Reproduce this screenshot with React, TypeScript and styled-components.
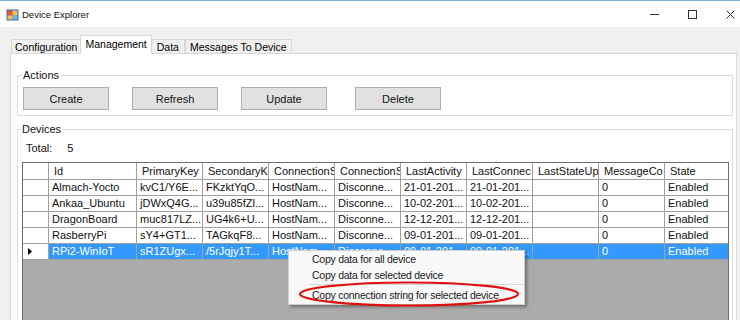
import styled, { createGlobalStyle } from "styled-components";

const GlobalStyle = createGlobalStyle`
  body {
    margin: 0;
    background: #f0f0f0;
    font-family: "Liberation Sans", Arial, sans-serif;
    color: #000;
  }
  #root {
    width: 740px;
    height: 320px;
    overflow: hidden;
  }
`;

// header captions as far as the narrow columns show them
const COLUMNS = [
  "Id",
  "PrimaryKey",
  "SecondaryK",
  "ConnectionS",
  "ConnectionS",
  "LastActivity",
  "LastConnec",
  "LastStateUp",
  "MessageCo",
  "State",
];

const DEVICES = [
  ["Almach-Yocto", "kvC1/Y6E...", "FKzktYqO...", "HostNam...", "Disconne...", "21-01-201...", "21-01-201...", "", "0", "Enabled"],
  ["Ankaa_Ubuntu", "jDWxQ4G...", "u39u85fZl...", "HostNam...", "Disconne...", "10-02-201...", "10-02-201...", "", "0", "Enabled"],
  ["DragonBoard", "muc817LZ...", "UG4k6+U...", "HostNam...", "Disconne...", "12-12-201...", "12-12-201...", "", "0", "Enabled"],
  ["RasberryPi", "sY4+GT1...", "TAGkqF8...", "HostNam...", "Disconne...", "09-01-201...", "09-01-201...", "", "0", "Enabled"],
  ["RPi2-WinIoT", "sR1ZUgx...", "/5rJqjy1T...", "HostNam...", "Disconne...", "09-01-201...", "09-01-201...", "", "0", "Enabled"],
];

const SELECTED = 4;

export default function App() {
  return (
    <Window>
      <GlobalStyle />
      <TitleBar>
        <AppIcon width="13" height="12" viewBox="0 0 13 12">
          <rect x="0.5" y="0.5" width="12" height="11" fill="#2f6fc4" />
          <rect x="1.5" y="1.5" width="5" height="5" fill="#e8572a" />
          <rect x="6.5" y="1.5" width="5" height="5" fill="#f4c542" />
          <rect x="1.5" y="6.5" width="5" height="4" fill="#f4c542" />
          <rect x="6.5" y="6.5" width="5" height="4" fill="#7fb2ec" />
        </AppIcon>
        <Title>Device Explorer</Title>
        <Controls>
          <svg width="9" height="9" viewBox="0 0 9 9">
            <line x1="0" y1="4.5" x2="9" y2="4.5" stroke="#333" strokeWidth="1" />
          </svg>
          <svg width="9" height="9" viewBox="0 0 9 9">
            <rect x="0.5" y="0.5" width="8" height="8" fill="none" stroke="#333" strokeWidth="1" />
          </svg>
          <svg width="9" height="9" viewBox="0 0 9 9">
            <path d="M0.5 0.5 L8.5 8.5 M8.5 0.5 L0.5 8.5" stroke="#333" strokeWidth="1" />
          </svg>
        </Controls>
      </TitleBar>

      <Main>
        <TabStrip>
          <Tab>Configuration</Tab>
          <Tab $active>Management</Tab>
          <Tab $pad={5}>Data</Tab>
          <Tab $pad={4}>Messages To Device</Tab>
        </TabStrip>

        <Panel>
          <GroupBox>
            <Legend>Actions</Legend>
            <ButtonRow>
              <Button>Create</Button>
              <Button>Refresh</Button>
              <Button>Update</Button>
              <Button $extraGap>Delete</Button>
            </ButtonRow>
          </GroupBox>

          <DevicesBox>
            <Legend>Devices</Legend>
            <TotalRow>
              <span>Total:</span>
              <TotalValue>5</TotalValue>
            </TotalRow>
            <Grid>
              <Row>
                <HeaderCell />
                {COLUMNS.map((c, i) => (
                  <HeaderCell key={i}>{c}</HeaderCell>
                ))}
              </Row>
              {DEVICES.map((d, i) => (
                <Row key={d[0]}>
                  <RowHeader>
                    {i === SELECTED && (
                      <svg width="4" height="7" viewBox="0 0 4 7">
                        <path d="M0 0 L4 3.5 L0 7 Z" fill="#000" />
                      </svg>
                    )}
                  </RowHeader>
                  {d.map((v, j) => (
                    <Cell key={j} $selected={i === SELECTED}>
                      {v}
                    </Cell>
                  ))}
                </Row>
              ))}
            </Grid>
          </DevicesBox>
        </Panel>
      </Main>

      <ContextMenu>
        <MenuItem>Copy data for all device</MenuItem>
        <MenuItem>Copy data for selected device</MenuItem>
        <Separator />
        <MenuItem>Copy connection string for selected device</MenuItem>
      </ContextMenu>
      <Highlight width="230" height="30" viewBox="0 0 230 30">
        <ellipse cx="115" cy="15" rx="109" ry="11.5" fill="none" stroke="#e0100f" strokeWidth="2.2" />
      </Highlight>
    </Window>
  );
}

const Window = styled.div`
  position: relative;
  width: 740px;
  height: 320px;
  display: flex;
  flex-direction: column;
  background: #f0f0f0;
`;

const TitleBar = styled.div`
  height: 26px;
  border-top: 1px solid #7aaede;
  background: #fff;
  display: flex;
  align-items: center;
  padding-left: 6px;
`;

const AppIcon = styled.svg`
  margin-top: 1px;
`;

const Title = styled.div`
  margin-left: 3px;
  font-size: 9.5px;
  color: #111;
`;

const Controls = styled.div`
  margin-left: auto;
  display: flex;
  align-items: center;
  gap: 29px;
  padding-right: 5px;
  margin-top: 1px;
`;

const Main = styled.div`
  flex: 1;
  min-height: 0;
  overflow: hidden;
  display: flex;
  flex-direction: column;
  padding: 8px 3px 0 10px;
`;

const TabStrip = styled.div`
  display: flex;
  align-items: flex-end;
  height: 19px;
  margin-bottom: -1px;
  padding-left: 1px;
  position: relative;
  z-index: 1;
`;

const Tab = styled.div<{ $active?: boolean; $pad?: number }>`
  box-sizing: border-box;
  height: ${(p) => (p.$active ? "19px" : "15px")};
  padding: 0 ${(p) => (p.$active ? 4 : p.$pad ?? 3)}px;
  margin: 0 ${(p) => (p.$active ? "-1px" : "0")};
  line-height: ${(p) => (p.$active ? "17px" : "14px")};
  font-size: 10.5px;
  background: ${(p) => (p.$active ? "#fff" : "#f0f0f0")};
  border: 1px solid #d9d9d9;
  border-bottom: ${(p) => (p.$active ? "none" : "1px solid #d9d9d9")};
  position: relative;
  z-index: ${(p) => (p.$active ? 2 : 1)};
  white-space: nowrap;
`;

const Panel = styled.div`
  flex: 1;
  background: #fff;
  border: 1px solid #d9d9d9;
  border-bottom: none;
  padding: 15px 3px 0 6px;
`;

const GroupBox = styled.fieldset`
  margin: 0;
  min-width: 0;
  border: 1px solid #dcdcdc;
  padding: 6px 5px 5px 5px;
`;

const DevicesBox = styled(GroupBox)`
  margin-top: 7px;
  padding: 7px 3px 0 4px;
  border-bottom: none;
`;

const Legend = styled.legend`
  font-size: 11px;
  line-height: 12px;
  padding: 0 1px;
  margin-left: -1px;
  color: #111;
`;

const ButtonRow = styled.div`
  display: flex;
  gap: 23px;
`;

const Button = styled.button<{ $extraGap?: boolean }>`
  width: 86px;
  height: 23px;
  margin: 0 0 0 ${(p) => (p.$extraGap ? "5px" : "0")};
  padding: 0;
  background: #e1e1e1;
  border: 1px solid #adadad;
  font-family: "Liberation Sans", Arial, sans-serif;
  font-size: 11px;
  color: #111;
`;

const TotalRow = styled.div`
  display: flex;
  font-size: 11px;
  line-height: 12px;
  padding-left: 4px;
  color: #111;
`;

const TotalValue = styled.span`
  margin-left: 15px;
`;

const Grid = styled.div`
  margin-top: 8px;
  height: 170px;
  border: 1px solid #6e6e6e;
  background: #ababab;
  font-size: 11px;
`;

const Row = styled.div`
  display: grid;
  grid-template-columns: 26px 88px repeat(8, 66px) 1fr;
`;

const BaseCell = styled.div`
  box-sizing: border-box;
  height: 16px;
  line-height: 15px;
  border-right: 1px solid #a0a0a0;
  border-bottom: 1px solid #a0a0a0;
  white-space: nowrap;
  overflow: hidden;
  &:last-child {
    border-right: none;
  }
`;

const HeaderCell = styled(BaseCell)`
  height: 17px;
  line-height: 16px;
  padding-left: 5px;
  background: #fff;
  color: #111;
`;

const RowHeader = styled(BaseCell)`
  background: #fff;
  display: flex;
  align-items: center;
  padding-left: 5px;
`;

const Cell = styled(BaseCell)<{ $selected?: boolean }>`
  padding-left: 3px;
  background: ${(p) => (p.$selected ? "#3399ff" : "#fff")};
  color: ${(p) => (p.$selected ? "#fff" : "#111")};
`;

const ContextMenu = styled.div`
  position: absolute;
  left: 288px;
  top: 250px;
  width: 237px;
  box-sizing: border-box;
  padding: 0 0 1px;
  background: #f9f9f9;
  border: 1px solid #cfcfcf;
  box-shadow: 2px 2px 3px rgba(0, 0, 0, 0.35);
  z-index: 5;
`;

const MenuItem = styled.div`
  height: 16px;
  line-height: 16px;
  padding-left: 23px;
  font-size: 10.5px;
  letter-spacing: -0.25px;
  color: #1a1a1a;
  white-space: nowrap;
`;

const Separator = styled.div`
  height: 1px;
  margin: 1px 0 2px 20px;
  background: #d7d7d7;
`;

const Highlight = styled.svg`
  position: absolute;
  left: 294px;
  top: 279px;
  z-index: 6;
  pointer-events: none;
`;
